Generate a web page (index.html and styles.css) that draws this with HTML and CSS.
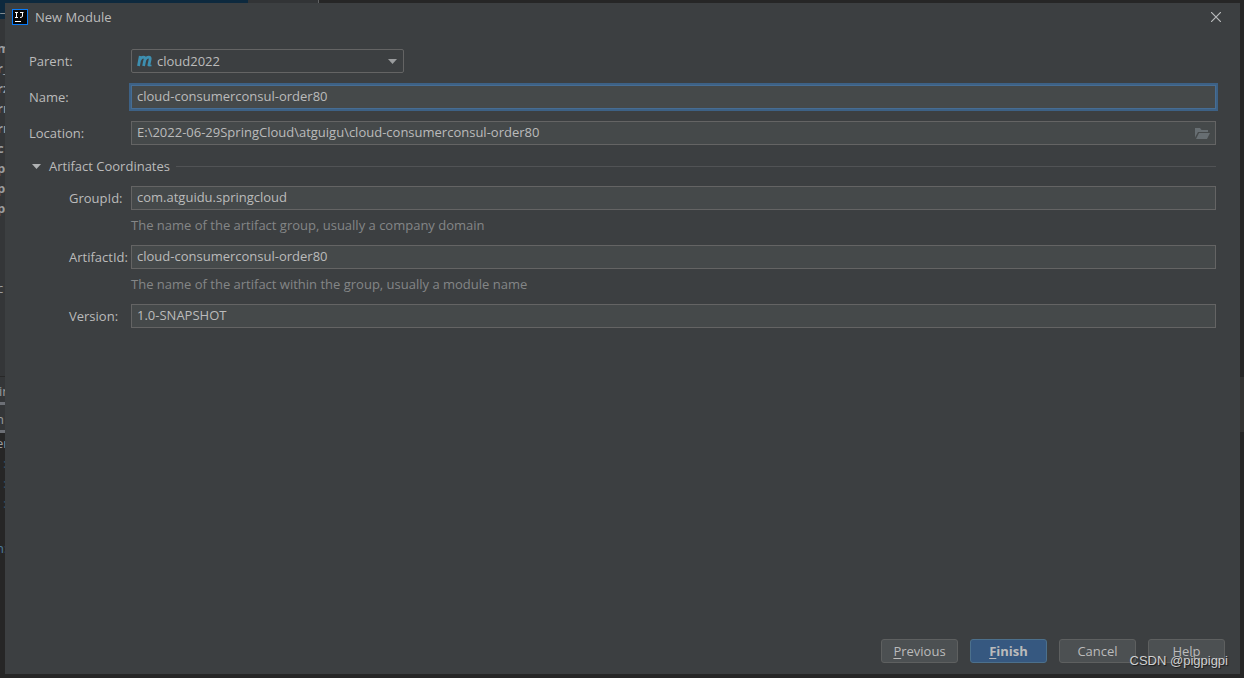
FILE: index.html
```html
<!DOCTYPE html>
<html lang="en">
<head>
<meta charset="utf-8">
<title>New Module</title>
<link rel="stylesheet" href="styles.css">
</head>
<body>
<div class="editor" aria-hidden="true">
  <div class="editor-top"><span class="editor-selected"></span><span class="editor-tab"></span></div>
  <div class="strip strip-head">_</div>
  <div class="strip strip-tree">
    <b>m</b><b>r_</b><b>rz</b><b>rr</b><b>rr</b><b>c</b><b>p</b><b>p</b><b>p</b><span></span><span></span><span></span><span>c</span>
  </div>
  <div class="strip strip-tab">in</div>
  <div class="strip strip-tab strip-tab-last">n</div>
  <div class="strip strip-code"><span>er</span><i>:</i><i>:</i><i>:</i><span class="code-end">n:</span></div>
  <div class="edge"></div>
</div>

<form class="dialog" onsubmit="return false">
  <header class="titlebar">
    <svg class="logo" viewBox="0 0 16 16" aria-hidden="true">
      <rect width="16" height="16" fill="#087cfa"/>
      <rect x="1" y="1" width="14" height="14" fill="#050505"/>
      <path d="M3 3.500h3M4.500 3.500v5M3 8.500h3M8 3.500h3.500M10.500 3v4q0 1.500-2.500 1.500" fill="none" stroke="#fff" stroke-width="1"/>
      <path d="M3 12.500h6" stroke="#fff" stroke-width="1"/>
    </svg>
    <h1 class="title">New Module</h1>
    <button class="close" type="button" aria-label="Close">
      <svg viewBox="0 0 10 10" width="10" height="10"><path d="M0 0l10 10M10 0L0 10" stroke="#b9bbbc" stroke-width="1.200"/></svg>
    </button>
  </header>

  <main class="form">
    <div class="row">
      <label for="parent">Parent:</label>
      <div class="combo">
        <select id="parent"><option>cloud2022</option></select>
        <svg class="maven" viewBox="0 0 16 12" aria-hidden="true">
          <path d="M1.500 11L3.300 1M6.600 11L7.900 4.500Q8.300 2.200 6.500 2.200Q4 2.200 2.900 5M11.700 11L13.100 4.500Q13.600 2.200 11.800 2.200Q9.200 2.200 7.900 5" fill="none" stroke="#3d8fb0" stroke-width="2.800"/>
          <path d="M11 10.500h3.500" stroke="#3d8fb0" stroke-width="1.600"/>
        </svg>
        <svg class="arrow" viewBox="0 0 9 5" aria-hidden="true"><path d="M0 0h9L4.500 5z" fill="#9a9c9e"/></svg>
      </div>
    </div>
    <div class="row">
      <label for="name">Name:</label>
      <input class="field focused" id="name" type="text" value="cloud-consumerconsul-order80">
    </div>
    <div class="row">
      <label for="location">Location:</label>
      <div class="browse">
        <input class="field" id="location" type="text" value="E:\2022-06-29SpringCloud\atguigu\cloud-consumerconsul-order80">
        <button class="folder" type="button" aria-label="Browse">
          <svg viewBox="0 0 15 11" width="15" height="11"><path d="M0 9.500V0h5l1.500 2H13v2H3z" fill="#676e72"/><path d="M4 5h11l-3 6H1z" fill="#676e72"/></svg>
        </button>
      </div>
    </div>

    <section aria-labelledby="coordinates">
      <button class="group-head" type="button" aria-expanded="true">
        <svg viewBox="0 0 9 5" width="9" height="5"><path d="M0 0h9L4.500 5z" fill="#b0b2b3"/></svg>
        <span id="coordinates">Artifact Coordinates</span>
        <span class="rule"></span>
      </button>
      <div class="row nested">
        <label for="group">GroupId:</label>
        <input class="field" id="group" type="text" value="com.atguidu.springcloud">
        <p class="hint">The name of the artifact group, usually a company domain</p>
      </div>
      <div class="row nested">
        <label for="artifact">ArtifactId:</label>
        <input class="field" id="artifact" type="text" value="cloud-consumerconsul-order80">
        <p class="hint">The name of the artifact within the group, usually a module name</p>
      </div>
      <div class="row nested">
        <label for="version">Version:</label>
        <input class="field" id="version" type="text" value="1.0-SNAPSHOT">
      </div>
    </section>
  </main>

  <footer class="actions">
    <button class="btn" type="button"><u>P</u>revious</button>
    <button class="btn primary" type="submit"><u>F</u>inish</button>
    <button class="btn" type="button">Cancel</button>
    <button class="btn" type="button">Help</button>
  </footer>
</form>
<div class="watermark">CSDN @pigpigpi</div>
</body>
</html>
```
FILE: styles.css
```css
* { box-sizing: border-box; }

body {
  position: relative;
  display: flex;
  min-height: 100vh;
  margin: 0;
  padding: 3px 4px 4px 5px;
  background: #262626;
  color: #bbbbbb;
  font: 13px/18px "Open Sans", "Noto Sans", sans-serif;
}

/* Editor window behind the dialog */
.editor { position: absolute; inset: 0; overflow: hidden; }
.editor-top { display: flex; height: 3px; }
.editor-selected { width: 248px; background: #0d293e; }
.editor-tab { width: 71px; background: #323436; border-right: 1px solid #606264; }
.strip { width: 5px; overflow: hidden; background: #343638; color: #9a9c9e; white-space: nowrap; }
.strip-head { height: 16px; background: #0d293e; line-height: 8px; }
.strip-tree { height: 358px; padding-top: 19px; border-bottom: 1px solid #282828; }
.strip-tree > * { display: block; height: 20px; line-height: 20px; text-indent: -3px; }
.strip-tab { height: 28px; line-height: 28px; border-bottom: 3px solid #6c6f75; text-indent: -1px; }
.strip-tab-last { text-indent: -4px; }
.strip-code { height: 245px; background: #262626; }
.strip-code > * { display: block; height: 20px; line-height: 20px; text-indent: -4px; }
.strip-code > i { color: #2f5068; text-indent: 3px; font-style: normal; }
.strip-code > .code-end { margin-top: 25px; color: #4d7c9c; }
.edge { position: absolute; top: 377px; right: 0; width: 4px; height: 55px; background: #343332; }

.dialog {
  position: relative;
  display: flex;
  flex: 1;
  flex-direction: column;
  min-width: 0;
  background: #3c3f41;
}

.titlebar { display: flex; align-items: center; height: 28px; padding: 0 19px 0 7px; }
.logo { width: 16px; height: 16px; }
.title { flex: 1; margin: 0 0 0 7px; font-size: 13px; line-height: 18px; font-weight: 400; }
.close, .folder { display: grid; place-items: center; padding: 0; border: 0; background: none; }

.form { flex: 1; padding: 18px 24px 0; }
.row { display: grid; grid-template-columns: 102px 1fr; align-items: center; margin-bottom: 12px; }
.row.nested { grid-template-columns: 62px 1fr; margin: 0 0 11px 40px; }

.field, .combo select {
  display: block;
  width: 100%;
  height: 24px;
  padding: 0 5px 2px;
  border: 1px solid #646464;
  border-radius: 0;
  outline: 0;
  background: #45494a;
  color: #bbbbbb;
  font: inherit;
}
.field.focused { border-color: #466d94; box-shadow: 0 0 0 2px #3d6185; }
.combo { position: relative; width: 273px; }
.combo select { padding: 0 25px; border-radius: 2px; background: #3c3f41; appearance: none; }
.maven { position: absolute; top: 6px; left: 6px; width: 16px; height: 12px; }
.arrow { position: absolute; top: 10px; right: 7px; width: 9px; height: 5px; pointer-events: none; }
.browse { position: relative; }
.folder { position: absolute; top: 0; right: 0; width: 28px; height: 24px; }

.group-head {
  display: flex;
  align-items: center;
  width: 100%;
  height: 18px;
  margin-bottom: 11px;
  padding: 0 0 0 3px;
  border: 0;
  background: none;
  color: inherit;
  font: inherit;
}
.group-head svg { margin-right: 8px; }
.rule { flex: 1; height: 1px; margin-left: 6px; background: #515355; }
.hint { grid-column: 2; margin: 6px 0 0; color: #848687; }

.actions { display: flex; justify-content: flex-end; gap: 12px; padding: 0 15px 11px; }
.btn {
  width: 77px;
  height: 24px;
  padding: 0;
  border: 1px solid #5e6060;
  border-radius: 3px;
  background: #4c5052;
  color: #bbbbbb;
  font: inherit;
}
.btn u { text-underline-offset: 2px; }
.btn.primary { border-color: #4c708c; background: #365880; font-weight: 700; }

.watermark {
  position: absolute;
  right: 16px;
  bottom: 8px;
  color: #d0d1d2;
  font: 13px/18px "Liberation Sans", Arial, sans-serif;
  text-shadow: 1px 1px 1px #1c1c1c;
}
```
